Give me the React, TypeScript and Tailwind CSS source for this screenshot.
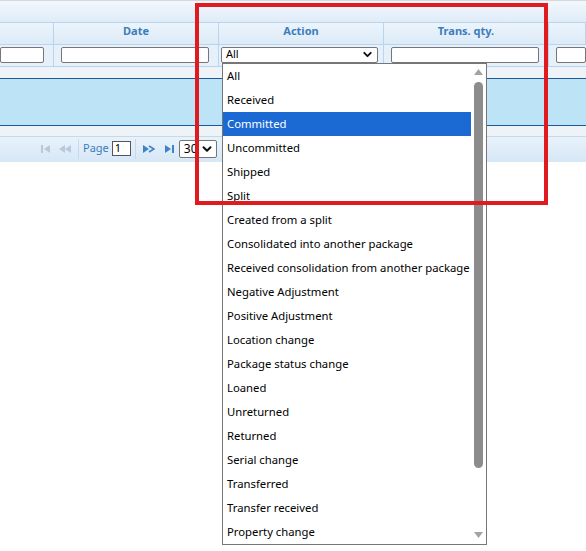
import { ChevronDown } from 'lucide-react';

const actions = [
  'All',
  'Received',
  'Committed',
  'Uncommitted',
  'Shipped',
  'Split',
  'Created from a split',
  'Consolidated into another package',
  'Received consolidation from another package',
  'Negative Adjustment',
  'Positive Adjustment',
  'Location change',
  'Package status change',
  'Loaned',
  'Unreturned',
  'Returned',
  'Serial change',
  'Transferred',
  'Transfer received',
  'Property change',
];

const columns = [
  { label: '', width: 'w-[54px]' },
  { label: 'Date', width: 'w-[165px]' },
  { label: 'Action', width: 'w-[165px]' },
  { label: 'Trans. qty.', width: 'w-[165px]' },
  { label: '', width: 'flex-1' },
];

function App() {
  return (
    <div className="relative w-[586px] h-[551px] overflow-hidden bg-white font-['Noto_Sans',sans-serif]">
      {/* grid top bar */}
      <div className="h-[22px] border-t border-[#d4d9de] bg-gradient-to-b from-[#f2f7fc] to-[#dfecf8]" />

      {/* column headers */}
      <div className="flex h-[22px] border-t border-[#b8d4ee] bg-gradient-to-b from-[#ecf4fb] to-[#dcebf8]">
        {columns.map((c, i) => (
          <div
            key={i}
            className={`${c.width} shrink-0 border-r border-[#b8d4ee] flex items-center justify-center pb-[4px] text-[11px] font-bold text-[#3a7dbd]`}
          >
            {c.label}
          </div>
        ))}
      </div>

      {/* filter row */}
      <div className="flex h-[23px] border-t border-[#b8d4ee] border-b bg-[#e5f0fa]">
        <div className="w-[54px] shrink-0 border-r border-[#b8d4ee] flex items-center pr-[9px] pb-[2px]">
          <div className="h-[16px] w-full bg-white border border-[#767676] rounded-[2px]" />
        </div>
        <div className="w-[165px] shrink-0 border-r border-[#b8d4ee] flex items-center px-[7px] pr-[9px] pb-[2px]">
          <div className="h-[16px] w-full bg-white border border-[#767676] rounded-[2px]" />
        </div>
        <div className="w-[165px] shrink-0 border-r border-[#b8d4ee] flex items-center pl-[2px] pr-[5px] pb-[2px]">
          <div className="h-[16px] w-full bg-white border border-[#767676] rounded-[2px] flex items-center justify-between pl-[4px] pr-[3px] text-[11px] text-black">
            <span>All</span>
            <ChevronDown size={13} strokeWidth={3.5} className="text-[#111]" />
          </div>
        </div>
        <div className="w-[165px] shrink-0 border-r border-[#b8d4ee] flex items-center px-[7px] pr-[9px] pb-[2px]">
          <div className="h-[16px] w-full bg-white border border-[#767676] rounded-[2px]" />
        </div>
        <div className="flex-1 flex items-center pl-[7px] pb-[2px]">
          <div className="h-[16px] w-full bg-white border border-[#767676] rounded-[2px]" />
        </div>
      </div>

      {/* body */}
      <div className="h-[11px] bg-[#eef3f8]" />
      <div className="h-[48px] bg-[#bde4f6] border-y border-[#1d5a9c]" />
      <div className="h-[10px] bg-[#eef3f8]" />

      {/* pager */}
      <div className="h-[26px] border-t border-[#c2d9ee] bg-gradient-to-b from-[#e9f2fa] to-[#d6e7f6] flex items-center pb-[2px]">
        <div className="ml-[41px] flex items-center gap-[8px] text-[#b7c9da]">
          <svg width="10" height="8" viewBox="0 0 10 8">
            <rect x="0" y="0" width="2" height="8" fill="currentColor" />
            <path d="M9 0 L3 4 L9 8 Z" fill="currentColor" />
          </svg>
          <svg width="12" height="8" viewBox="0 0 12 8">
            <path d="M6 0 L0 4 L6 8 Z" fill="currentColor" />
            <path d="M12 0 L6 4 L12 8 Z" fill="currentColor" />
          </svg>
        </div>
        <div className="ml-[7px] w-px h-[20px] bg-[#c7d9ea]" />
        <span className="ml-[4px] text-[11px] text-[#3a7dbd]">Page</span>
        <div className="ml-[3px] w-[19px] h-[15px] bg-white border border-[#555] flex items-center pl-[2px] text-[11px] text-black">
          1
        </div>
        <div className="ml-[4px] w-px h-[20px] bg-[#c7d9ea]" />
        <div className="ml-[7px] flex items-center gap-[10px] text-[#3f83c4]">
          <svg width="12" height="8" viewBox="0 0 12 8">
            <path d="M0 0 L6 4 L0 8 Z" fill="currentColor" />
            <path d="M6 1 L11 4 L6 7" fill="none" stroke="currentColor" strokeWidth="1.6" />
          </svg>
          <svg width="9" height="8" viewBox="0 0 9 8">
            <path d="M0 0 L6 4 L0 8 Z" fill="currentColor" />
            <rect x="7" y="0" width="2" height="8" fill="currentColor" />
          </svg>
        </div>
        <div className="ml-[5px] w-[38px] h-[18px] bg-white border border-[#767676] rounded-[2px] flex items-center justify-between pl-[4px] pr-[2px] text-[12px] text-black">
          <span>30</span>
          <ChevronDown size={14} strokeWidth={3.5} className="text-[#111]" />
        </div>
      </div>

      {/* open dropdown list */}
      <div className="absolute left-[222px] top-[63px] w-[265px] h-[482px] bg-white border border-[#767676] flex">
        <div className="flex-1 flex flex-col">
          {actions.map((a) => (
            <div
              key={a}
              className={`h-[24px] shrink-0 flex items-center pl-[4px] text-[11.3px] whitespace-nowrap ${
                a === 'Committed' ? 'bg-[#1b69d3] text-white' : 'text-black'
              }`}
            >
              {a}
            </div>
          ))}
        </div>
        <div className="w-[15px] shrink-0 flex flex-col items-center pt-[5px] pb-[6px]">
          <svg width="9" height="6" viewBox="0 0 9 6">
            <path d="M4.5 0 L9 6 L0 6 Z" fill="#a3a3a3" />
          </svg>
          <div className="mt-[7px] w-[9px] h-[386px] rounded-full bg-[#8c8c8c]" />
          <div className="flex-1" />
          <svg width="9" height="6" viewBox="0 0 9 6">
            <path d="M0 0 L9 0 L4.5 6 Z" fill="#a3a3a3" />
          </svg>
        </div>
      </div>

      {/* highlight rectangle */}
      <div className="absolute left-[195px] top-[3px] w-[353px] h-[202px] border-[4px] border-[#e01b1f] pointer-events-none" />
    </div>
  );
}

export default App;
